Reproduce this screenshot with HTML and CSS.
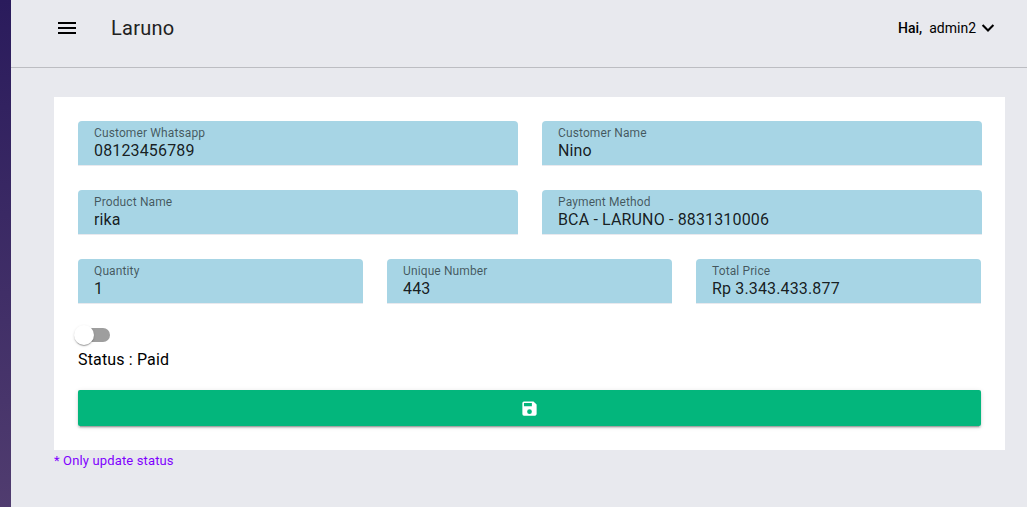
FILE: index.html
```html
<!DOCTYPE html>
<html lang="en">
<head>
<meta charset="utf-8">
<title>Laruno</title>
<link rel="stylesheet" href="styles.css">
</head>
<body>
<div class="app">
  <aside class="sidebar"></aside>
  <div class="page">
    <header class="topbar">
      <button class="menu-btn" aria-label="Menu">
        <svg width="24" height="24" viewBox="0 0 24 24"><path d="M3 18h18v-2H3v2zm0-5h18v-2H3v2zm0-7v2h18V6H3z"/></svg>
      </button>
      <h1 class="brand">Laruno</h1>
      <div class="user">
        <span class="greeting">Hai,</span>
        <span class="username">admin2</span>
        <svg class="chevron" width="20" height="20" viewBox="0 0 24 24"><path d="M5.500 8.500l6.500 6.500 6.500-6.500" fill="none" stroke="#000" stroke-width="2.500"/></svg>
      </div>
    </header>
    <main class="content">
      <form class="card">
        <div class="row row-2">
          <div class="field"><label class="label">Customer Whatsapp</label><div class="value">08123456789</div></div>
          <div class="field"><label class="label">Customer Name</label><div class="value">Nino</div></div>
        </div>
        <div class="row row-2">
          <div class="field"><label class="label">Product Name</label><div class="value">rika</div></div>
          <div class="field"><label class="label">Payment Method</label><div class="value">BCA - LARUNO - 8831310006</div></div>
        </div>
        <div class="row row-3">
          <div class="field"><label class="label">Quantity</label><div class="value">1</div></div>
          <div class="field"><label class="label">Unique Number</label><div class="value">443</div></div>
          <div class="field"><label class="label">Total Price</label><div class="value">Rp 3.343.433.877</div></div>
        </div>
        <div class="toggle"><span class="thumb"></span></div>
        <div class="status">Status : Paid</div>
        <button class="save" type="button" aria-label="Save">
          <svg width="19" height="19" viewBox="0 0 24 24"><path fill="#fff" fill-rule="evenodd" d="M17 3H5a2 2 0 0 0-2 2v14a2 2 0 0 0 2 2h14c1.100 0 2-.9 2-2V7l-4-4zm-5 16a3 3 0 1 1 0-6 3 3 0 0 1 0 6zm3-10H5V5h10v4z"/></svg>
        </button>
      </form>
      <p class="note">* Only update status</p>
    </main>
  </div>
</div>
</body>
</html>
```

FILE: styles.css
```css
* {
  box-sizing: border-box;
}

body {
  margin: 0;
  font-family: Roboto, "Liberation Sans", sans-serif;
  color: #000;
  background: #e8e9ee;
}

.app {
  display: flex;
  height: 507px;
  overflow: hidden;
}

.sidebar {
  flex: 0 0 11px;
  background: linear-gradient(#2a1b5c, #503c6f);
}

.page {
  flex: 1;
}

.topbar {
  display: flex;
  align-items: center;
  height: 68px;
  padding: 0 29px 12px 44px;
  border-bottom: 1px solid #bcbdc2;
}

.menu-btn {
  display: flex;
  width: 24px;
  height: 24px;
  padding: 0;
  border: 0;
  background: none;
}

.brand {
  margin: 0 0 0 32px;
  font-size: 20px;
  font-weight: 400;
  line-height: 32px;
  letter-spacing: 0.25px;
  color: #212121;
}

.user {
  display: flex;
  align-items: center;
  margin-left: auto;
  font-size: 14px;
  line-height: 20px;
}

.greeting {
  margin-right: 7px;
  font-weight: 500;
}

.chevron {
  margin-left: 2px;
}

.content {
  padding: 29px 22px 0 43px;
}

.card {
  width: 951px;
  height: 353px;
  padding: 24px;
  background: #fff;
}

.row {
  display: grid;
  column-gap: 24px;
  margin-bottom: 24px;
}

.row-2 {
  grid-template-columns: 440px 440px;
}

.row-3 {
  grid-template-columns: repeat(3, 285px);
}

.field {
  height: 45px;
  padding: 4px 16px 0;
  border-bottom: 1px solid #e8e9ee;
  border-radius: 4px 4px 0 0;
  background: #a7d5e5 padding-box;
}

.label {
  display: block;
  font-size: 12px;
  line-height: 16px;
  letter-spacing: 0.12px;
  color: rgba(0, 0, 0, 0.6);
}

.value {
  font-size: 16px;
  line-height: 20px;
  letter-spacing: 0.15px;
  color: rgba(0, 0, 0, 0.87);
}

.toggle {
  width: 32px;
  height: 14px;
  border-radius: 7px;
  background: #9e9e9e;
}

.thumb {
  display: block;
  width: 20px;
  height: 20px;
  margin-left: -4px;
  border-radius: 50%;
  background: #fff;
  box-shadow: 0 2px 1px -1px rgba(0, 0, 0, 0.2), 0 1px 1px rgba(0, 0, 0, 0.14), 0 1px 3px rgba(0, 0, 0, 0.12);
  transform: translateY(-3px);
}

.status {
  margin-top: 8px;
  font-size: 16px;
  line-height: 20px;
  letter-spacing: 0.15px;
}

.save {
  display: flex;
  align-items: center;
  justify-content: center;
  width: 903px;
  height: 36px;
  margin-top: 20px;
  padding: 0;
  border: 0;
  border-radius: 2px;
  background: #03b67c;
  box-shadow: 0 3px 1px -2px rgba(0, 0, 0, 0.2), 0 2px 2px rgba(0, 0, 0, 0.14), 0 1px 5px rgba(0, 0, 0, 0.12);
}

.note {
  margin: 2px 0 0;
  font-size: 13px;
  line-height: 18px;
  letter-spacing: 0.14px;
  color: #8000ff;
}
```
